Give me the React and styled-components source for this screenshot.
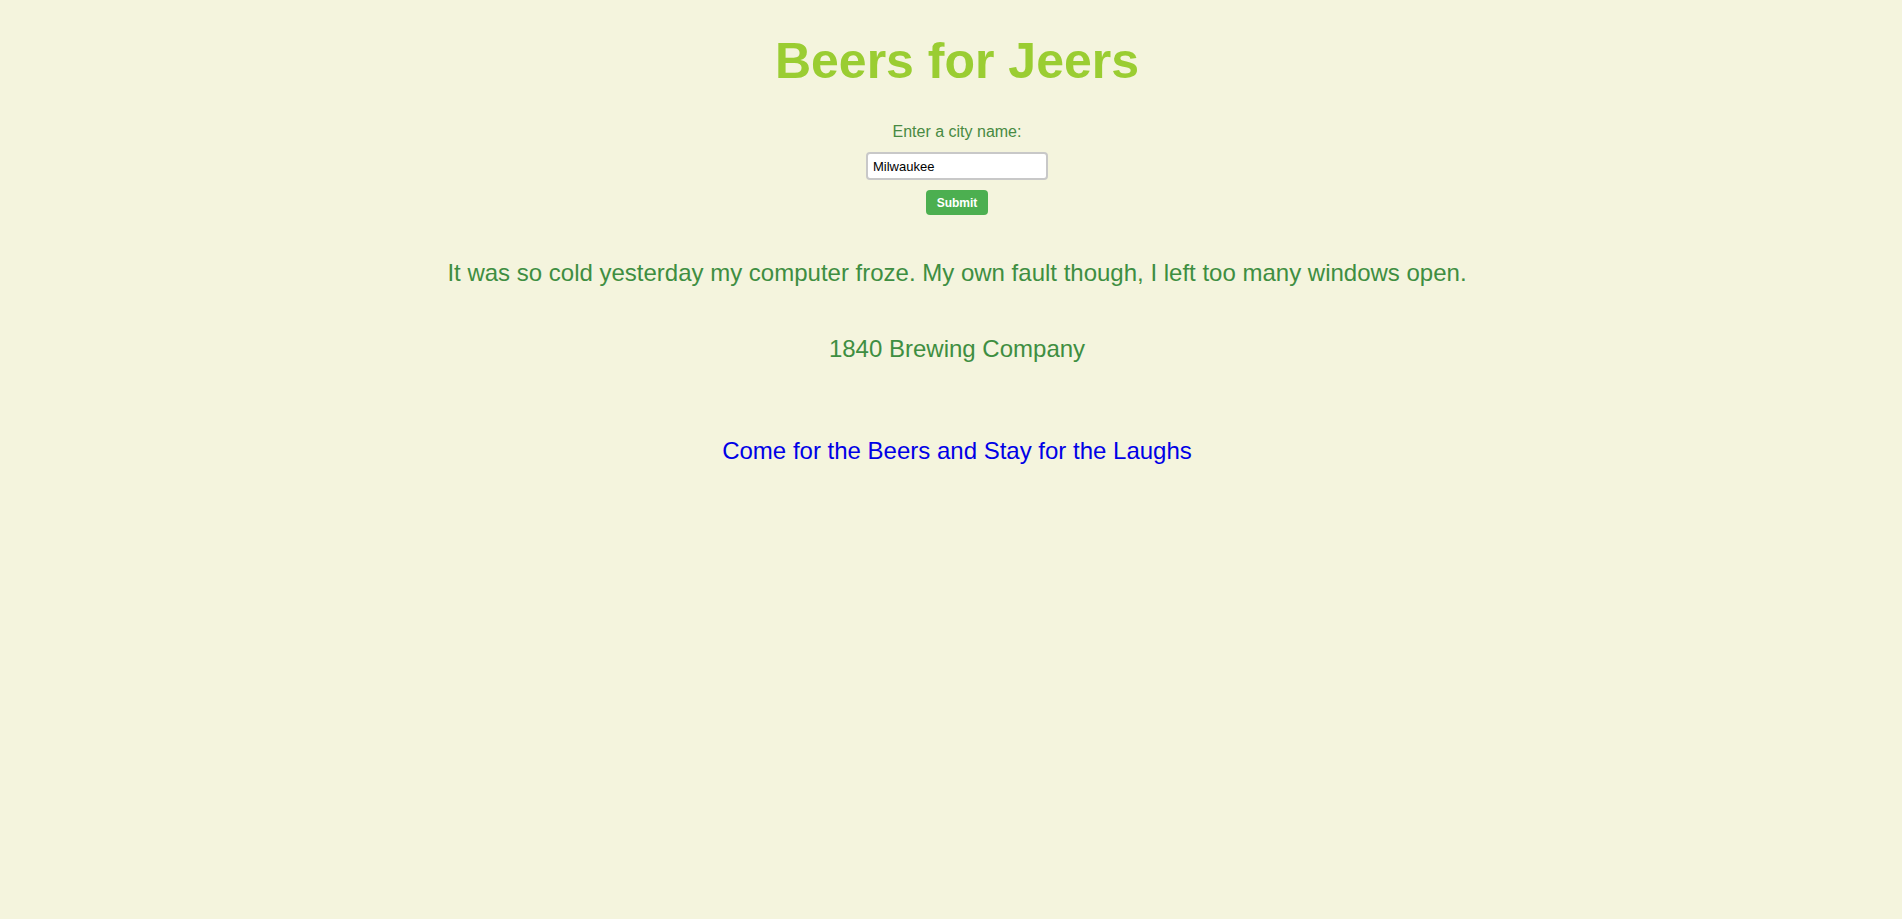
import React, { useState } from "react";
import styled, { createGlobalStyle } from "styled-components";

const GlobalStyle = createGlobalStyle`
  html, body {
    margin: 0;
    padding: 0;
    background-color: #f4f4dd;
    font-family: "Liberation Sans", Arial, sans-serif;
  }
`;

const Page = styled.div`
  min-height: 100vh;
  box-sizing: border-box;
  padding: 32px 0 0 12px;
  display: flex;
  flex-direction: column;
  align-items: center;
  text-align: center;
`;

const Title = styled.h1`
  margin: 0;
  font-size: 50px;
  line-height: 58px;
  font-weight: bold;
  color: #9acd32;
`;

const Form = styled.form`
  margin-top: 33px;
  display: flex;
  flex-direction: column;
  align-items: center;
`;

const Label = styled.label`
  font-size: 16px;
  line-height: 18px;
  color: #488a42;
`;

const CityInput = styled.input`
  margin-top: 11px;
  box-sizing: border-box;
  width: 182px;
  height: 28px;
  padding: 0 5px;
  border: 2px solid #c8c8c8;
  border-radius: 4px;
  background: #fff;
  font-family: "Liberation Sans", Arial, sans-serif;
  font-size: 13px;
  color: #000;
  outline: none;
`;

const SubmitButton = styled.button`
  margin-top: 10px;
  height: 25px;
  padding: 0 11px;
  border: none;
  border-radius: 4px;
  background-color: #4caf50;
  color: #fff;
  font-family: "Liberation Sans", Arial, sans-serif;
  font-size: 12px;
  font-weight: bold;
  cursor: pointer;
`;

const Line = styled.p`
  margin: ${(p) => p.$gap}px 0 0;
  font-size: 24px;
  line-height: 28px;
  color: ${(p) => p.$color || "#3e8e41"};
`;

function App() {
  const [city, setCity] = useState("Milwaukee");

  return (
    <>
      <GlobalStyle />
      <Page>
        <Title>Beers for Jeers</Title>
        <Form onSubmit={(e) => e.preventDefault()}>
          <Label htmlFor="city">Enter a city name:</Label>
          <CityInput
            id="city"
            type="text"
            value={city}
            onChange={(e) => setCity(e.target.value)}
          />
          <SubmitButton type="submit">Submit</SubmitButton>
        </Form>
        <Line $gap={44}>
          It was so cold yesterday my computer froze. My own fault though, I left too many windows open.
        </Line>
        <Line $gap={48}>1840 Brewing Company</Line>
        <Line $gap={74} $color="#0000e6">
          Come for the Beers and Stay for the Laughs
        </Line>
      </Page>
    </>
  );
}

export default App;
